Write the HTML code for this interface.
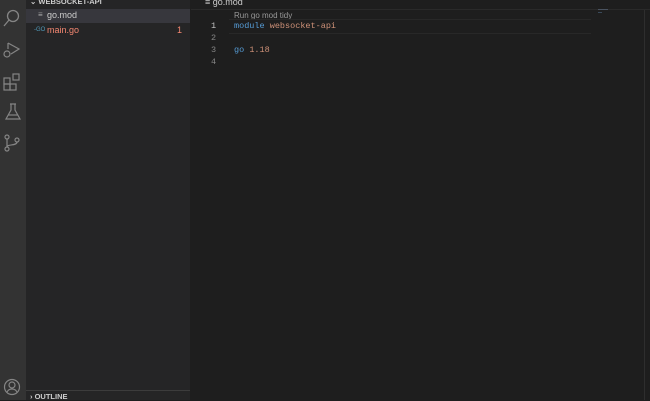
<!DOCTYPE html>
<html><head><style>
body{margin:0;width:650px;height:400px;background:#1e1e1e;overflow:hidden;font-family:"Liberation Sans",sans-serif;position:relative}
.act{position:absolute;left:0;top:0;width:26px;height:400px;background:#333333}
.side{position:absolute;left:26px;top:0;width:164px;height:400px;background:#252526}
.ed{position:absolute;left:191px;top:0;right:0;height:400px;background:#1e1e1e}
.t{position:absolute;white-space:nowrap}
.m{font-family:"Liberation Mono",monospace;font-size:8.5px}
svg{position:absolute}
</style></head><body>
<div class="act">
<svg style="left:2px;top:8px" width="20" height="20" viewBox="0 0 20 20" fill="none" stroke="#858585" stroke-width="1.3"><circle cx="11" cy="8" r="5.5"/><path d="M7 12L2 18"/></svg>
<svg style="left:2px;top:40px" width="20" height="20" viewBox="0 0 20 20" fill="none" stroke="#858585" stroke-width="1.2"><path d="M6 3v6M6 3l11 6-8 5"/><circle cx="5" cy="14" r="3"/></svg>
<svg style="left:2px;top:72px" width="20" height="20" viewBox="0 0 20 20" fill="none" stroke="#858585" stroke-width="1.2"><rect x="2" y="6" width="6" height="6"/><rect x="2" y="12" width="6" height="6"/><rect x="8" y="12" width="6" height="6"/><rect x="11" y="2" width="6" height="6"/></svg>
<svg style="left:3px;top:102px" width="20" height="20" viewBox="0 0 20 20" fill="none" stroke="#858585" stroke-width="1.2"><path d="M7 2h6M8 2v6L3 17h14L12 8V2"/><path d="M5 13h10"/></svg>
<svg style="left:2px;top:133px" width="20" height="20" viewBox="0 0 20 20" fill="none" stroke="#858585" stroke-width="1.2"><circle cx="5" cy="4" r="2"/><circle cx="5" cy="16" r="2"/><circle cx="15" cy="7" r="2"/><path d="M5 6v8M15 9c0 4-10 2-10 5"/></svg>
<svg style="left:2px;top:377px" width="20" height="20" viewBox="0 0 20 20" fill="none" stroke="#858585" stroke-width="1.2"><circle cx="10" cy="10" r="7.5"/><circle cx="10" cy="8" r="3"/><path d="M5 15c2-4 8-4 10 0"/></svg>
</div>
<div class="side">
<div class="t" style="left:4px;top:-3px;font-size:7.5px;font-weight:bold;color:#ccc">⌄ WEBSOCKET-API</div>
<div style="position:absolute;left:0;top:9px;width:164px;height:14px;background:#37373d"></div>
<div class="t" style="left:12px;top:10px;font-size:8px;color:#aaa">≡</div>
<div class="t" style="left:21px;top:10px;font-size:9px;color:#ccc">go.mod</div>
<div class="t" style="left:8px;top:27px;font-size:6px;color:#519aba">-GO</div>
<div class="t" style="left:21px;top:25px;font-size:9px;color:#f48771">main.go</div>
<div class="t" style="left:151px;top:25px;font-size:9px;color:#f48771">1</div>
<div style="position:absolute;left:0;top:390px;width:164px;height:1px;background:#3c3c3c"></div>
<div class="t" style="left:4px;top:392px;font-size:7.5px;font-weight:bold;color:#ccc">› OUTLINE</div>
</div>
<div class="ed">
<div class="t" style="left:14px;top:-3px;font-size:9px;color:#ccc">≡ go.mod</div>
<div style="position:absolute;left:0;top:9px;right:0;height:1px;background:#2a2a2a"></div>
<div class="t" style="left:43px;top:11px;font-size:8px;color:#999">Run go mod tidy</div>
<div style="position:absolute;left:38px;top:19px;width:362px;height:13px;border-top:1px solid #282828;border-bottom:1px solid #282828"></div>
<div class="t m" style="left:20px;top:21px;color:#c6c6c6">1</div>
<div class="t m" style="left:20px;top:33px;color:#858585">2</div>
<div class="t m" style="left:20px;top:45px;color:#858585">3</div>
<div class="t m" style="left:20px;top:57px;color:#858585">4</div>
<div class="t m" style="left:43px;top:21px"><span style="color:#569cd6">module</span> <span style="color:#ce9178">websocket-api</span></div>
<div class="t m" style="left:43px;top:45px"><span style="color:#569cd6">go</span> <span style="color:#ce9178">1.18</span></div>
<div style="position:absolute;left:407px;top:9px;width:10px;height:1px;background:#4a5360"></div>
<div style="position:absolute;left:407px;top:12px;width:4px;height:1px;background:#3a4a5a"></div>
<div style="position:absolute;left:453px;top:10px;width:1px;height:390px;background:#2e2e2e"></div>
</div>
</body></html>
